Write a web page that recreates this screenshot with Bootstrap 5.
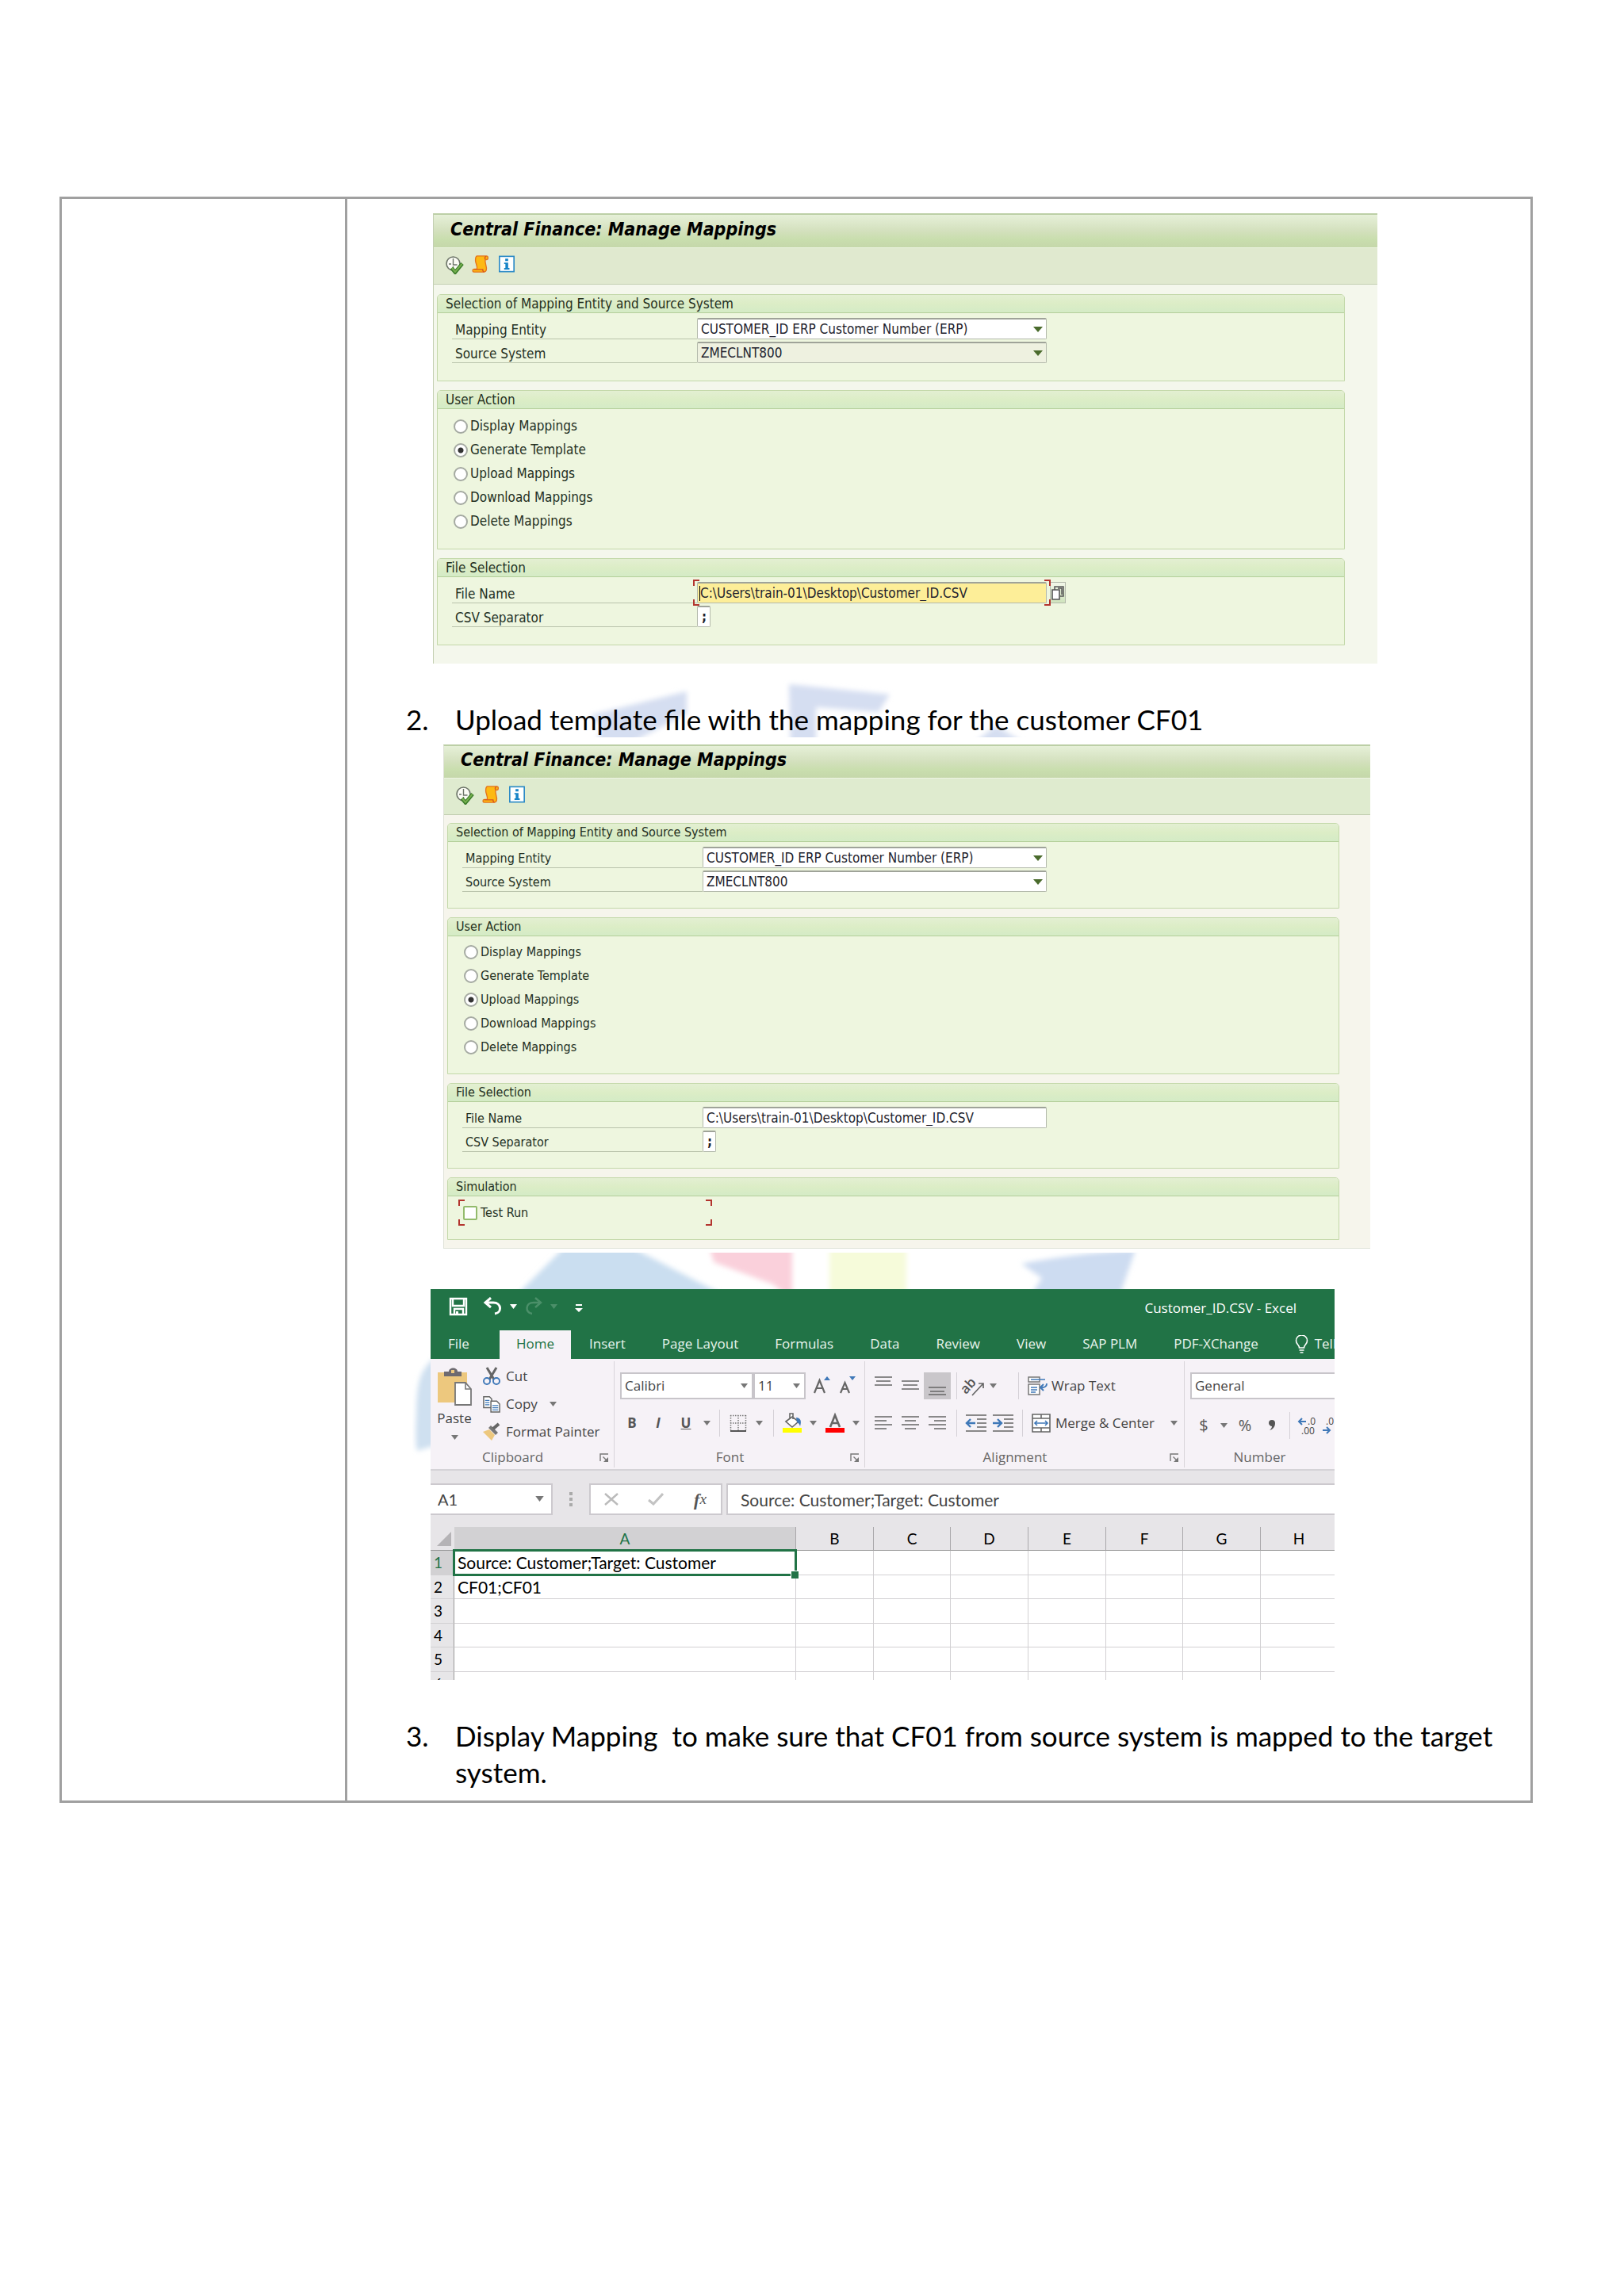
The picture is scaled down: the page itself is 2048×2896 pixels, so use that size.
<!DOCTYPE html>
<html lang="en">
<head>
<meta charset="utf-8">
<meta name="viewport" content="width=device-width, initial-scale=1">
<title>Central Finance: Manage Mappings</title>
<link href="https://cdn.jsdelivr.net/npm/bootstrap@5.3.0/dist/css/bootstrap.min.css" rel="stylesheet">
<style>
body { background: #fff; color: #000; font-family: Lato, "Noto Sans", sans-serif; }
.sheet { margin: 248px 115px 0 75px; border: 3px solid #a0a0a0; }
.side { width: 360px; border-right: 3px solid #a0a0a0; }
.content { padding: 18px 16px 13px 0; }
.wash { left: 0; top: 0; width: 1493px; height: 2020px; z-index: 0; pointer-events: none; }
.flow { z-index: 1; }
.step { padding-left: 74px; font-size: 35px; line-height: 46px; margin-top: 47px; }
.step-no { width: 62px; }
.space-pre { white-space: pre-wrap; }

/* SAP screens */
.sap { font-family: "DejaVu Sans Condensed", "DejaVu Sans", sans-serif; font-size: 17px; color: #24301f; border: 1px solid #c3cfb2; border-top: 2px solid #bccfa6; border-right: 0; max-width: 100%; }
.sap-one { width: 1191px; margin-left: 108px; background: #f4f7ec; border-bottom: 0; padding-bottom: 23px; }
.sap-two { width: 1169px; margin-left: 121px; margin-top: 9px; background: #f6f5ec; font-size: 16px; padding-bottom: 10px; border-color: #dfe2d8; border-top-color: #bccfa6; }
.sap-title { height: 42px; margin: 0; padding: 0 21px 4px; font-size: 23px; line-height: 37px; font-weight: 700; font-style: italic; color: #000; background: linear-gradient(#e6f0d8, #d3e0bd 50%, #c9deae 75%, #c5d7aa); border-bottom: 1px solid #edf4e2; }
.sap-two .sap-title { height: 41px; line-height: 34px; }
.sap-tools { height: 46px; padding: 0 14px 4px; background: #e0e9cf; border-bottom: 1px solid #c3cfb2; }
.sap-tools .btn { width: 24px; height: 24px; margin-right: 9px; }
.sap-two .sap-tools { background: #dfebcf; }
.sap-body { padding: 12px 41px 0 4px; }
.sap-two .sap-body { padding: 10px 39px 0 4px; }
.box { border: 1px solid #c3d8a9; border-radius: 5px 5px 0 0; background: #eef6df; margin-bottom: 11px; }
.box:last-child { margin-bottom: 0; }
.box-head { height: 23px; margin: 0; padding-left: 10px; font-size: inherit; font-weight: 400; line-height: 22px; color: inherit; background: linear-gradient(#e3efd2, #dcedc6 50%, #d4ebc6); border-bottom: 1px solid #b4cf9a; border-radius: 4px 4px 0 0; }
.box-fields { height: 85px; padding: 6px 0 0 18px; }
.box-radios { height: 176px; padding: 7px 0 0 20px; }
.sap-two .box-fields { height: 83px; }
.sap-two .box-radios { height: 173px; padding-top: 5px; }
.box-check { height: 54px; padding: 4px 0 0 13px; }
.line { height: 30px; }
.line > label { width: 309px; height: 27px; padding-left: 4px; line-height: 30px; border-bottom: 1px solid #b9c3ab; }
.sap-two .line > label { width: 303px; padding-left: 4px; }
.fieldwrap { width: 441px; height: 27px; }
.sap-two .fieldwrap { width: 434px; }
.inp { display: block; width: 100%; height: 27px; margin: 0; padding: 0 4px; border: 1px solid #b3b9ab; border-top: 2px solid #9fa399; border-radius: 2px; background: #fff; color: #1f1f2e; font: inherit; font-size: 17px; line-height: 22px; appearance: none; outline: 0; }
.inp-gray { background: #eef1e0; }
.inp-hot { background: #fdee98; padding-left: 3px; }
.inp-sep { width: 17px; padding: 0 5px; font-weight: 700; }
.tri { right: 5px; top: 11px; width: 12px; height: 7px; pointer-events: none; }
.cursor { left: 3px; top: 5px; width: 1px; height: 19px; background: #000; }
.corners { inset: -3px -5px; pointer-events: none; --r: linear-gradient(#b3342e, #b3342e);
  background: var(--r) 0 0/8px 2px, var(--r) 0 0/2px 8px, var(--r) 100% 0/8px 2px, var(--r) 100% 0/2px 8px, var(--r) 0 100%/8px 2px, var(--r) 0 100%/2px 8px, var(--r) 100% 100%/8px 2px, var(--r) 100% 100%/2px 8px; background-repeat: no-repeat; }
.corners-in { inset: 0; }
.f4 { width: 20px; height: 27px; margin-left: 4px; border: 1px solid #b3b9ab; background: linear-gradient(#f2f7e8, #cfe3bd); }
.f4 svg { display: block; }
.opt { height: 30px; }
.opt input { appearance: none; flex: none; width: 18px; height: 18px; margin: 0 3px 0 0; border: 2px solid #a5aaa2; border-radius: 50%; background: #fff; }
.opt input:checked { background: radial-gradient(circle, #333 0 3px, #fff 4px); }
.tick { width: 320px; height: 33px; padding-left: 6px; }
.tick input { appearance: none; width: 18px; height: 18px; margin: 0 4px 0 0; border: 2px solid #93bb6c; border-radius: 2px; background: #fff; }

/* Spreadsheet */
.xl { width: 1140px; max-width: 100%; margin: 51px 0 0 105px; font-family: "Open Sans", "Noto Sans", sans-serif; font-size: 17px; color: #444; background: #fff; }
.xl-top { background: #217346; color: #fff; height: 88px; }
.xl-bar { height: 52px; padding: 0 48px 4px 22px; }
.xl-bar .btn { height: 28px; margin-bottom: 4px; color: #fff; }
.xl-bar .btn.faded { color: #4b8f69; }
.xl-bar .tri2 { color: inherit; }
.xl-tabs a { padding: 0 23px; height: 36px; line-height: 34px; color: #e8f4ec; text-decoration: none; white-space: nowrap; }
.xl-tabs a.on { background: #f6f2f7; color: #217346; padding: 0 21px; }
.xl-tabs a.file { padding: 0 38px 0 22px; }
.ribbon { height: 141px; background: #f6f2f7; border-bottom: 2px solid #d5d3d7; white-space: nowrap; }
.ribbon svg { overflow: visible; }
.grp { position: relative; border-right: 1px solid #d8d4da; height: 134px; margin-top: 3px; flex: none; }
.grp-clip { width: 232px; padding: 1px 0 0 8px; }
.grp-font { width: 316px; padding: 14px 0 0 7px; }
.grp-align { width: 403px; padding: 14px 0 0 6px; }
.grp-num { width: 189px; padding: 14px 0 0 7px; border: 0; }
.cap { left: 0; right: 24px; bottom: 0; height: 26px; line-height: 26px; color: #666; text-align: center; }
.grp-num .cap { right: 0; }
.launch { right: 6px; bottom: 6px; width: 12px; height: 12px; }
.tool { display: flex; align-items: center; justify-content: center; flex: none; height: 34px; padding: 0; border: 0; background: none; color: #555; font: inherit; }
.w16 { width: 16px; } .w20 { width: 20px; } .w30 { width: 30px; } .w34 { width: 34px; } .w38 { width: 38px; }
.vr1 { width: 1px; height: 34px; margin: 0 7px; background: #d4d0d6; flex: none; }
.tools { height: 34px; }
.tools + .tools { margin-top: 13px; }
.spaced { gap: 1px; }
.dark { color: #444; gap: 5px; }
.pressed { background: #c9c6ca; }
.pick-font { width: 168px; } .pick-size { width: 66px; }
.picked { display: block; width: 100%; height: 34px; padding: 0 4px; border: 2px solid #c8c5ca; border-radius: 0; background: #fff; color: #444; font: inherit; line-height: 28px; appearance: none; }
.picked-wrap .tri2 { right: 7px; top: 14px; }
.tri2 { width: 9px; height: 6px; color: #777; pointer-events: none; }
.side-btn { height: 35px; gap: 7px; justify-content: flex-start; color: #444; }
.paste { width: 44px; margin: 4px 14px 0 0; color: #444; height: 100px; flex-direction: column; justify-content: flex-start; }
.fbar { height: 71px; background: #e7e5e8; padding: 16px 0 0; font-family: Lato, sans-serif; font-size: 21px; }
.fbox { height: 40px; border: 2px solid #ccc9ce; background: #fff; }
.fname { width: 154px; border-left: 0; }
.fname .tri2 { right: 9px; top: 14px; width: 11px; height: 7px; }
.fbtns { width: 168px; margin-left: 46px; padding: 0 9px; position: relative; }
.dots { left: -27px; top: 9px; }
.fx { font-family: "Liberation Serif", serif; font-style: italic; font-size: 22px; }
.fval { margin-left: 5px; border-right: 0; }
.fin { border: 0; background: none; width: 100%; height: 36px; padding: 0 16px; color: #444; font: inherit; }
.fname .fin { padding: 0 9px; font-size: 20px; }
.grid-wrap { height: 193px; overflow: hidden; background: #fff; }
.cells { width: 1144px; table-layout: fixed; border-collapse: separate; border-spacing: 0; font-family: Lato, sans-serif; font-size: 21px; line-height: 24px; color: #000; }
.cells th, .cells td { padding: 0 4px; font-weight: 400; border-right: 1px solid #d2d0d3; border-bottom: 1px solid #d2d0d3; white-space: nowrap; }
.cells th { font-size: 19px; }
.cells thead th { height: 30px; background: #e7e5e8; border-color: #a9a7aa; border-bottom: 1px solid #999; text-align: center; }
.cells tbody th { height: 30px; background: #e7e6e8; border-right-color: #999; padding: 0 10px 0 4px; text-align: left; }
.cells tbody tr:nth-child(odd) th { height: 31px; }
.cells .cur { background: #d2d1d3 !important; color: #217346; }
.cells td.active { position: relative; }
.col-head { width: 30px; } .col-a { width: 431px; } .col-s { width: 97px; } .col-m { width: 98px; }
.ring { inset: -2px; border: 3px solid #217346; pointer-events: none; }
.knob { right: -4px; bottom: -5px; width: 9px; height: 9px; background: #217346; border: 1px solid #fff; border-width: 1px 0 0 1px; box-sizing: content-box; }
</style>
</head>
<body>
<svg class="d-none" xmlns="http://www.w3.org/2000/svg">
  <symbol id="run" viewBox="0 0 24 24"><circle cx="10.5" cy="10.5" r="8.5" fill="#fbfcf5" stroke="#6c7468" stroke-width="1.6"/><path d="M10.5 4v8h5M5 11h3M10.5 14v3" fill="none" stroke="#6c7468" stroke-width="1.4"/><path d="M8.5 16l4.500 5.500L22 10.500" fill="none" stroke="#3c7d2b" stroke-width="4.600"/><path d="M8.800 16l4.200 5L21.500 10.800" fill="none" stroke="#76b04e" stroke-width="2"/></symbol>
  <symbol id="scroll" viewBox="0 0 24 24"><path d="M7 1h13c3 0 3 5 0 5h-1.500c-1 5 2.500 9 1.500 14-.5 2-2 3-4 3H3c-2.500 0-2.500-4 0-4h4c1-5-2-8-2-12 0-3 0-5 2-6z" fill="#fdb913" stroke="#e4741c" stroke-width="1.500"/><path d="M3 19.500h12c0 2 1 3.500 2 3M20 1.500c-2 0-2.500 2-1.500 4" fill="none" stroke="#d9541e" stroke-width="1.600"/></symbol>
  <symbol id="info" viewBox="0 0 24 24"><rect x="2" y="1.500" width="20" height="21" fill="#fff" stroke="#2b8ac6" stroke-width="1.800"/><path d="M10 4.500h4v3.500h-4zM8.500 10H14v7.500h1.800V19.500H8.500v-2h1.700V12H8.500z" fill="#1684c7"/></symbol>
  <symbol id="tri" viewBox="0 0 12 7"><path d="M0 0h12L6 7z" fill="#4a6b2c"/></symbol>
  <symbol id="tri2" viewBox="0 0 9 6"><path d="M0 0h9L4.500 6z" fill="currentColor"/></symbol>
  <symbol id="launch" viewBox="0 0 12 12"><path d="M1 10V1h10M4.500 4.500l5 5" fill="none" stroke="#777" stroke-width="1.400"/><path d="M11 5v6H5z" fill="#777"/></symbol>
</svg>

<main class="sheet d-flex">
  <div class="side flex-shrink-0"></div>
  <div class="content flex-grow-1 position-relative">
    <svg class="wash position-absolute" viewBox="438 251 1493 2020" aria-hidden="true">
      <defs><filter id="soft" x="-10%" y="-10%" width="120%" height="120%"><feGaussianBlur stdDeviation="3"/></filter></defs>
      <svg x="700" y="850" width="620" height="80" viewBox="700 850 620 80"><g filter="url(#soft)" fill="#d5def1">
        <path d="M866 872L744 902 758 914 752 940H790L866 900z"/><path d="M995 863L1122 876 1108 898 1029 892V940H997z"/><path d="M1225 940L1256 915 1296 940z"/></g></svg>
      <svg x="600" y="1580" width="900" height="50" viewBox="600 1580 900 50"><g filter="url(#soft)">
        <path d="M715 1570H790L925 1640H645z" fill="#cadef0"/><path d="M894 1570H999V1640L975 1620 900 1592z" fill="#fad0db"/><path d="M1046 1570H1143V1640H1046z" fill="#f6fbda"/><path d="M1288 1594Q1350 1582 1432 1576L1410 1640H1296L1314 1612z" fill="#cddcf1"/></g></svg>
      <path d="M560 1705C532 1722 526 1735 525 1780 524 1810 524 1822 526 1830L560 1820z" fill="#cfe0f0" filter="url(#soft)"/>
    </svg>
    <div class="flow position-relative">

      <section class="sap sap-one">
        <h1 class="sap-title">Central Finance: Manage Mappings</h1>
        <div class="sap-tools d-flex align-items-center">
          <button class="btn p-0 border-0 d-flex" aria-label="Execute"><svg width="24" height="24"><use href="#run"/></svg></button>
          <button class="btn p-0 border-0 d-flex" aria-label="Log"><svg width="24" height="22"><use href="#scroll"/></svg></button>
          <button class="btn p-0 border-0 d-flex" aria-label="Information"><svg width="24" height="22"><use href="#info"/></svg></button>
        </div>
        <div class="sap-body">
          <div class="box">
            <h2 class="box-head">Selection of Mapping Entity and Source System</h2>
            <div class="box-fields">
              <div class="line d-flex"><label for="e1">Mapping Entity</label><div class="fieldwrap position-relative"><select id="e1" class="inp"><option>CUSTOMER_ID ERP Customer Number (ERP)</option></select><svg class="tri position-absolute"><use href="#tri"/></svg></div></div>
              <div class="line d-flex"><label for="s1">Source System</label><div class="fieldwrap position-relative"><select id="s1" class="inp inp-gray"><option>ZMECLNT800</option></select><svg class="tri position-absolute"><use href="#tri"/></svg></div></div>
            </div>
          </div>
          <div class="box">
            <h2 class="box-head">User Action</h2>
            <div class="box-radios">
              <label class="opt d-flex align-items-center"><input type="radio" name="a1">Display Mappings</label>
              <label class="opt d-flex align-items-center"><input type="radio" name="a1" checked>Generate Template</label>
              <label class="opt d-flex align-items-center"><input type="radio" name="a1">Upload Mappings</label>
              <label class="opt d-flex align-items-center"><input type="radio" name="a1">Download Mappings</label>
              <label class="opt d-flex align-items-center"><input type="radio" name="a1">Delete Mappings</label>
            </div>
          </div>
          <div class="box">
            <h2 class="box-head">File Selection</h2>
            <div class="box-fields">
              <div class="line d-flex"><label for="f1">File Name</label><div class="fieldwrap position-relative"><input id="f1" class="inp inp-hot" value="C:\Users\train-01\Desktop\Customer_ID.CSV"><span class="cursor position-absolute"></span><span class="corners position-absolute"></span></div><button class="f4 p-0" aria-label="Browse"><svg width="18" height="24" viewBox="0 0 18 24"><path d="M5 8V4h11v12h-4M9 6h5v8" fill="none" stroke="#555" stroke-width="1.500"/><path d="M2 8h9v12H2z" fill="#fff" stroke="#555" stroke-width="1.600"/></svg></button></div>
              <div class="line d-flex"><label for="c1">CSV Separator</label><input id="c1" class="inp inp-sep" value=";"></div>
            </div>
          </div>
        </div>
      </section>

      <div class="step d-flex"><span class="step-no">2.</span><span>Upload template file with the mapping for the customer CF01</span></div>

      <section class="sap sap-two">
        <h1 class="sap-title">Central Finance: Manage Mappings</h1>
        <div class="sap-tools d-flex align-items-center">
          <button class="btn p-0 border-0 d-flex" aria-label="Execute"><svg width="24" height="24"><use href="#run"/></svg></button>
          <button class="btn p-0 border-0 d-flex" aria-label="Log"><svg width="24" height="22"><use href="#scroll"/></svg></button>
          <button class="btn p-0 border-0 d-flex" aria-label="Information"><svg width="24" height="22"><use href="#info"/></svg></button>
        </div>
        <div class="sap-body">
          <div class="box">
            <h2 class="box-head">Selection of Mapping Entity and Source System</h2>
            <div class="box-fields">
              <div class="line d-flex"><label for="e2">Mapping Entity</label><div class="fieldwrap position-relative"><select id="e2" class="inp"><option>CUSTOMER_ID ERP Customer Number (ERP)</option></select><svg class="tri position-absolute"><use href="#tri"/></svg></div></div>
              <div class="line d-flex"><label for="s2">Source System</label><div class="fieldwrap position-relative"><select id="s2" class="inp"><option>ZMECLNT800</option></select><svg class="tri position-absolute"><use href="#tri"/></svg></div></div>
            </div>
          </div>
          <div class="box">
            <h2 class="box-head">User Action</h2>
            <div class="box-radios">
              <label class="opt d-flex align-items-center"><input type="radio" name="a2">Display Mappings</label>
              <label class="opt d-flex align-items-center"><input type="radio" name="a2">Generate Template</label>
              <label class="opt d-flex align-items-center"><input type="radio" name="a2" checked>Upload Mappings</label>
              <label class="opt d-flex align-items-center"><input type="radio" name="a2">Download Mappings</label>
              <label class="opt d-flex align-items-center"><input type="radio" name="a2">Delete Mappings</label>
            </div>
          </div>
          <div class="box">
            <h2 class="box-head">File Selection</h2>
            <div class="box-fields">
              <div class="line d-flex"><label for="f2">File Name</label><div class="fieldwrap"><input id="f2" class="inp" value="C:\Users\train-01\Desktop\Customer_ID.CSV"></div></div>
              <div class="line d-flex"><label for="c2">CSV Separator</label><input id="c2" class="inp inp-sep" value=";"></div>
            </div>
          </div>
          <div class="box">
            <h2 class="box-head">Simulation</h2>
            <div class="box-check">
              <label class="tick d-flex align-items-center position-relative"><input type="checkbox">Test Run<span class="corners corners-in position-absolute"></span></label>
            </div>
          </div>
        </div>
      </section>

      <section class="xl overflow-hidden">
        <div class="xl-top">
          <div class="xl-bar d-flex align-items-center">
            <button class="btn p-0 border-0 d-flex align-items-center" aria-label="Save"><svg width="26" height="24" viewBox="0 0 26 24"><path d="M3 2h20v20H3zM6 3v8h14V3M8 21v-6h11v6" fill="none" stroke="#fff" stroke-width="2.400"/><path d="M10 18h3v4h-3z" fill="#fff"/></svg></button>
            <button class="btn p-0 border-0 d-flex align-items-center ms-3 gap-2" aria-label="Undo"><svg width="28" height="24" viewBox="0 0 28 24"><path d="M12 1L5 7l7 6M6 7h9c11 0 11 13 2 14" fill="none" stroke="#fff" stroke-width="3"/></svg><svg class="tri2"><use href="#tri2"/></svg></button>
            <button class="btn faded p-0 border-0 d-flex align-items-center ms-2 gap-2" aria-label="Redo"><svg width="26" height="24" viewBox="0 0 26 24"><path d="M15 1l7 6-7 6M21 7h-8C2 7 2 20 11 21" fill="none" stroke="currentColor" stroke-width="2.500"/></svg><svg class="tri2"><use href="#tri2"/></svg></button>
            <button class="btn p-0 border-0 d-flex align-items-center ms-3" aria-label="Customize"><svg width="22" height="16" viewBox="0 0 22 16"><path d="M7 5h8v2H7zM6 10h10l-5 5z" fill="#fff"/></svg></button>
            <span class="ms-auto">Customer_ID.CSV - Excel</span>
          </div>
          <nav class="xl-tabs d-flex">
            <a class="file" href="#">File</a><a class="on" href="#">Home</a><a href="#">Insert</a><a href="#">Page Layout</a><a href="#">Formulas</a><a href="#">Data</a><a href="#">Review</a><a href="#">View</a><a href="#">SAP PLM</a><a href="#">PDF-XChange</a><a href="#"><svg class="me-2" width="17" height="24" viewBox="0 0 17 24"><path d="M5.500 16c0-4-4-4-4-9a7 7 0 0 1 14 0c0 5-4 5-4 9zM5.500 19h6M6.500 22h4" fill="none" stroke="#fff" stroke-width="1.600"/></svg>Tell</a>
          </nav>
        </div>

        <div class="ribbon d-flex overflow-hidden">
          <div class="grp grp-clip">
            <div class="d-flex">
              <button class="tool paste"><svg width="44" height="54" viewBox="0 0 44 54"><path d="M1 9h37v38H1z" fill="#edc87e"/><path d="M9 8h6c0-6 11-6 11 0h5v6H9z" fill="#6d6a70"/><rect x="18" y="6" width="4" height="4" fill="#edc87e"/><path d="M23 22h13l7 8v20H23z" fill="#fff" stroke="#777" stroke-width="1.800"/><path d="M36 22v8h7" fill="none" stroke="#777" stroke-width="1.600"/></svg><span>Paste</span><svg class="tri2 mt-2"><use href="#tri2"/></svg></button>
              <div>
                <button class="tool side-btn"><svg width="22" height="24" viewBox="0 0 22 24"><path d="M5 1l9 15M17 1L8 16" stroke="#666" stroke-width="3"/><circle cx="5" cy="18" r="4" fill="none" stroke="#3f78b8" stroke-width="1.900"/><circle cx="17" cy="18" r="4" fill="none" stroke="#3f78b8" stroke-width="1.900"/></svg>Cut</button>
                <button class="tool side-btn"><svg width="22" height="24" viewBox="0 0 24 24"><path d="M1 2h8l3 3v12H1z" fill="#fff" stroke="#666" stroke-width="1.600"/><path d="M3 7h6M3 10h6M3 13h6" stroke="#3f78b8" stroke-width="1.300"/><path d="M11 8h8l4 4v11H11z" fill="#fff" stroke="#666" stroke-width="1.600"/><path d="M13 14h8M13 17h8M13 20h8" stroke="#3f78b8" stroke-width="1.300"/></svg>Copy<svg class="tri2 ms-2"><use href="#tri2"/></svg></button>
                <button class="tool side-btn"><svg width="22" height="22" viewBox="0 0 22 22"><path d="M0 11l8-3 7 7-4 7z" fill="#edc87e"/><path d="M7 6l3-3 9 9-3 3z" fill="#777"/><path d="M13 7l7-6" stroke="#666" stroke-width="4"/></svg>Format Painter</button>
              </div>
            </div>
            <div class="cap position-absolute">Clipboard</div><svg class="launch position-absolute"><use href="#launch"/></svg>
          </div>

          <div class="grp grp-font">
            <div class="tools d-flex">
              <div class="picked-wrap pick-font position-relative"><select class="picked" aria-label="Font"><option>Calibri</option></select><svg class="tri2 position-absolute"><use href="#tri2"/></svg></div>
              <div class="picked-wrap pick-size position-relative"><select class="picked" aria-label="Size"><option>11</option></select><svg class="tri2 position-absolute"><use href="#tri2"/></svg></div>
              <button class="tool w34 ms-1" aria-label="Grow font"><svg width="24" height="26" viewBox="0 0 24 26"><path d="M2 22L8.500 6 15 22M4.500 16h8" fill="none" stroke="#666" stroke-width="2.200"/><path d="M14 6l4-5 4 5z" fill="#3f78b8"/></svg></button>
              <button class="tool w34" aria-label="Shrink font"><svg width="24" height="26" viewBox="0 0 24 26"><path d="M1 22L6.500 9 12 22M3 17h7" fill="none" stroke="#666" stroke-width="2.200"/><path d="M12 1h8l-4 5z" fill="#3f78b8"/></svg></button>
            </div>
            <div class="tools spaced d-flex align-items-center">
              <button class="tool w30 fw-bold">B</button><button class="tool w34 fst-italic fw-bold">I</button><button class="tool w34 fw-bold text-decoration-underline">U</button><button class="tool w16" aria-label="Underline styles"><svg class="tri2"><use href="#tri2"/></svg></button>
              <span class="vr1"></span>
              <button class="tool w30" aria-label="Borders"><svg width="22" height="22" viewBox="0 0 22 22"><path d="M1 1.500h20M1 11h20M1.500 1v19M11 1v19M20.500 1v19" fill="none" stroke="#777" stroke-width="1.500" stroke-dasharray="1.500 1.500"/><path d="M1 21h20" stroke="#555" stroke-width="2"/></svg></button><button class="tool w20" aria-label="Border styles"><svg class="tri2"><use href="#tri2"/></svg></button>
              <span class="vr1"></span>
              <button class="tool w30" aria-label="Fill color"><svg width="26" height="26" viewBox="0 0 26 26"><path d="M5 11l8-6 8 6-8 7zM10 8V1h4v7" fill="#fff" stroke="#666" stroke-width="1.600"/><path d="M18 6c6 0 7 5 5 11-1-3-2-4-4-5z" fill="#3f78b8"/><path d="M1 19h24v6H1z" fill="#ff0"/></svg></button><button class="tool w20" aria-label="Fill colors"><svg class="tri2"><use href="#tri2"/></svg></button>
              <button class="tool w34" aria-label="Font color"><svg width="26" height="26" viewBox="0 0 26 26"><path d="M7 18l6-15 6 15M9 13h8" fill="none" stroke="#666" stroke-width="2.600"/><path d="M1 19h24v6H1z" fill="#f00"/></svg></button><button class="tool w16" aria-label="Font colors"><svg class="tri2"><use href="#tri2"/></svg></button>
            </div>
            <div class="cap position-absolute">Font</div><svg class="launch position-absolute"><use href="#launch"/></svg>
          </div>

          <div class="grp grp-align">
            <div class="tools d-flex align-items-center">
              <button class="tool w34" aria-label="Top"><svg width="22" height="24" viewBox="0 0 22 24"><path d="M0 1h22M2 6h18M0 11h22" stroke="#666" stroke-width="1.700"/></svg></button>
              <button class="tool w34" aria-label="Middle"><svg width="22" height="24" viewBox="0 0 22 24"><path d="M0 6h22M2 11h18M0 16h22" stroke="#666" stroke-width="1.700"/></svg></button>
              <button class="tool w34 pressed" aria-label="Bottom"><svg width="22" height="24" viewBox="0 0 22 24"><path d="M0 14h22M2 19h18M0 23h22" stroke="#666" stroke-width="1.700"/></svg></button>
              <span class="vr1"></span>
              <button class="tool w30" aria-label="Orientation"><svg width="26" height="26" viewBox="0 0 26 26"><text x="-5" y="16" transform="rotate(-48 8 12)" font-size="17" font-weight="600" fill="#555">ab</text><path d="M10 25L24 10M24 16v-6h-6" fill="none" stroke="#666" stroke-width="1.700"/></svg></button><button class="tool w16" aria-label="Orientations"><svg class="tri2"><use href="#tri2"/></svg></button>
              <span class="vr1 ms-4"></span>
              <button class="tool dark ms-1"><svg width="25" height="24" viewBox="0 0 25 24"><path d="M1 1h14v6H1zM1 10h14v13H1z" fill="#fff" stroke="#777" stroke-width="1.500"/><path d="M4 4h18M4 14h8M4 17h8M4 20h6" stroke="#3f78b8" stroke-width="1.500"/><path d="M24 9c0 4-2 5-7 5M20 10l-4 4 4 4" fill="none" stroke="#3f78b8" stroke-width="2"/></svg><span>Wrap Text</span></button>
            </div>
            <div class="tools d-flex align-items-center">
              <button class="tool w34" aria-label="Left"><svg width="22" height="18" viewBox="0 0 22 18"><path d="M0 1h22M0 6h15M0 11h22M0 16h15" stroke="#666" stroke-width="1.700"/></svg></button>
              <button class="tool w34" aria-label="Center"><svg width="22" height="18" viewBox="0 0 22 18"><path d="M0 1h22M4 6h14M0 11h22M4 16h14" stroke="#666" stroke-width="1.700"/></svg></button>
              <button class="tool w34" aria-label="Right"><svg width="22" height="18" viewBox="0 0 22 18"><path d="M0 1h22M7 6h15M0 11h22M7 16h15" stroke="#666" stroke-width="1.700"/></svg></button>
              <span class="vr1"></span>
              <button class="tool w34" aria-label="Decrease indent"><svg width="26" height="22" viewBox="0 0 26 22"><path d="M0 1h26M14 6h12M14 11h12M14 16h12M0 21h26" stroke="#666" stroke-width="1.500"/><path d="M1 11h11M6 6l-5 5 5 5" fill="none" stroke="#3f78b8" stroke-width="2.400"/></svg></button>
              <button class="tool w34" aria-label="Increase indent"><svg width="26" height="22" viewBox="0 0 26 22"><path d="M0 1h26M14 6h12M14 11h12M14 16h12M0 21h26" stroke="#666" stroke-width="1.500"/><path d="M0 11h11M6 6l5 5-5 5" fill="none" stroke="#3f78b8" stroke-width="2.400"/></svg></button>
              <span class="vr1"></span>
              <button class="tool dark ms-1"><svg width="25" height="24" viewBox="0 0 25 24"><path d="M1 1h22v22H1zM1 6h22M1 18h22M12 1v5M12 18v5" fill="#fff" stroke="#666" stroke-width="1.600"/><path d="M4 12h16M7 9l-3 3 3 3M17 9l3 3-3 3" fill="none" stroke="#3f78b8" stroke-width="1.600"/></svg><span>Merge &amp; Center</span></button><button class="tool w16 ms-3" aria-label="Merge options"><svg class="tri2"><use href="#tri2"/></svg></button>
            </div>
            <div class="cap position-absolute">Alignment</div><svg class="launch position-absolute"><use href="#launch"/></svg>
          </div>

          <div class="grp grp-num">
            <select class="picked border-end-0" aria-label="Number format"><option>General</option></select>
            <div class="tools d-flex align-items-center mt-3">
              <button class="tool w34 fs-5">$</button><button class="tool w16" aria-label="Currencies"><svg class="tri2"><use href="#tri2"/></svg></button><button class="tool w38 fs-5">%</button><button class="tool w30" aria-label="Comma style"><svg width="10" height="14" viewBox="0 0 10 14"><path d="M1 4a4 4 0 0 1 8 0c0 5-3 8-7 9 2-2 3-3 3-5-2 0-4-2-4-4z" fill="#555"/></svg></button>
              <span class="vr1"></span>
              <button class="tool w30" aria-label="Increase decimal"><svg width="24" height="24" viewBox="0 0 24 24"><path d="M1 7h9M5 3L1 7l4 4" fill="none" stroke="#3f78b8" stroke-width="2"/><text x="12" y="11" font-size="12" fill="#444">.0</text><text x="4" y="23" font-size="12" fill="#444">.00</text></svg></button>
              <button class="tool w30" aria-label="Decrease decimal"><svg width="24" height="24" viewBox="0 0 24 24"><path d="M1 18h9M6 14l4 4-4 4" fill="none" stroke="#3f78b8" stroke-width="2"/><text x="5" y="11" font-size="12" fill="#444">.0</text></svg></button>
            </div>
            <div class="cap position-absolute">Number</div>
          </div>
        </div>

        <div class="fbar d-flex">
          <div class="fbox fname position-relative flex-shrink-0"><input class="fin" aria-label="Name box" value="A1"><svg class="tri2 position-absolute"><use href="#tri2"/></svg></div>
          <div class="fbox fbtns d-flex align-items-center justify-content-between flex-shrink-0">
            <svg class="dots position-absolute" width="4" height="18"><path d="M0 0h4v4H0zM0 7h4v4H0zM0 14h4v4H0z" fill="#aaa"/></svg>
            <button class="tool w34" aria-label="Cancel"><svg width="18" height="16" viewBox="0 0 18 16"><path d="M1 1l16 14M17 1L1 15" stroke="#bbb" stroke-width="2.400"/></svg></button>
            <button class="tool w34" aria-label="Enter"><svg width="20" height="16" viewBox="0 0 20 16"><path d="M1 9l6 5L19 1" fill="none" stroke="#c3c3c3" stroke-width="3"/></svg></button>
            <button class="tool w34 fx" aria-label="Function"><b>f</b><small>x</small></button>
          </div>
          <div class="fbox fval flex-grow-1"><input class="fin" aria-label="Formula" value="Source: Customer;Target: Customer"></div>
        </div>

        <div class="grid-wrap">
          <table class="cells">
            <colgroup><col class="col-head"><col class="col-a"><col class="col-m"><col class="col-s"><col class="col-m"><col class="col-m"><col class="col-s"><col class="col-m"><col></colgroup>
            <thead><tr><th class="p-0 border-end-0"><svg class="d-block ms-2" width="18" height="18"><path d="M18 0v18H0z" fill="#b5b3b6"/></svg></th><th class="cur">A</th><th>B</th><th>C</th><th>D</th><th>E</th><th>F</th><th>G</th><th>H</th></tr></thead>
            <tbody>
              <tr><th class="cur">1</th><td class="active">Source: Customer;Target: Customer<span class="ring position-absolute"></span><span class="knob position-absolute"></span></td><td></td><td></td><td></td><td></td><td></td><td></td><td></td></tr>
              <tr><th>2</th><td>CF01;CF01</td><td></td><td></td><td></td><td></td><td></td><td></td><td></td></tr>
              <tr><th>3</th><td></td><td></td><td></td><td></td><td></td><td></td><td></td><td></td></tr>
              <tr><th>4</th><td></td><td></td><td></td><td></td><td></td><td></td><td></td><td></td></tr>
              <tr><th>5</th><td></td><td></td><td></td><td></td><td></td><td></td><td></td><td></td></tr>
              <tr><th>6</th><td></td><td></td><td></td><td></td><td></td><td></td><td></td><td></td></tr>
            </tbody>
          </table>
        </div>
      </section>

      <div class="step d-flex"><span class="step-no flex-shrink-0">3.</span><span class="space-pre">Display Mapping  to make sure that CF01 from source system is mapped to the target system.</span></div>
    </div>
  </div>
</main>
<script src="https://cdn.jsdelivr.net/npm/bootstrap@5.3.0/dist/js/bootstrap.bundle.min.js"></script>
</body>
</html>
